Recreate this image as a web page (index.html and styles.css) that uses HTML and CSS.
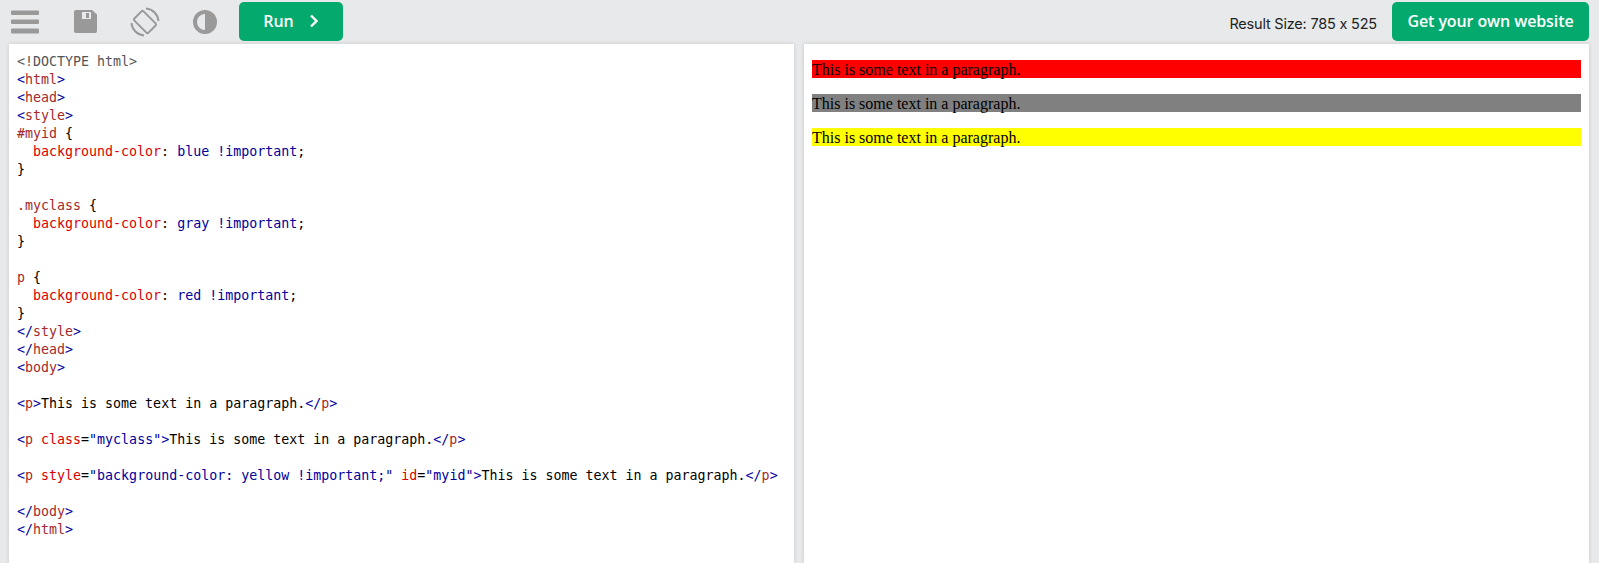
FILE: index.html
```html
<!DOCTYPE html>
<html lang="en">
<head>
<meta charset="utf-8">
<title>Tryit Editor</title>
<link rel="stylesheet" href="styles.css">
</head>
<body>
<header class="toolbar">
  <div class="tools">
    <svg class="icon menu" viewBox="0 0 28 24" width="28" height="24"><rect x="0" y="0.500" width="28" height="4.500" rx="1"/><rect x="0" y="9.500" width="28" height="4.500" rx="1"/><rect x="0" y="18.500" width="28" height="5" rx="1"/></svg>
    <svg class="icon save" viewBox="0 0 23 23" width="23" height="23"><path fill-rule="evenodd" d="M2 0H18L23 4.500V21a2 2 0 0 1-2 2H2a2 2 0 0 1-2-2V2a2 2 0 0 1 2-2ZM8 2V9H17V2ZM12 3H15V8H12Z"/></svg>
    <svg class="icon rotate" viewBox="0 0 30 30" width="30" height="30"><g fill="none" stroke="#999" stroke-width="2"><rect x="8.500" y="5" width="13" height="20" rx="1.500" transform="rotate(-45 15 15)"/><path d="M16 1.500A13.500 13.500 0 0 1 28.500 14"/><path d="M14 28.500A13.500 13.500 0 0 1 1.500 16"/></g></svg>
    <svg class="icon contrast" viewBox="0 0 24 24" width="24" height="24"><path fill-rule="evenodd" d="M12 0a12 12 0 1 1 0 24a12 12 0 0 1 0-24ZM12 4a8 8 0 0 0 0 16Z"/></svg>
    <button class="btn run" type="button">Run <svg class="chev" viewBox="0 0 10 14" width="10" height="14"><path d="M2 1.500L7.500 7L2 12.500" fill="none" stroke="#fff" stroke-width="2.400"/></svg></button>
  </div>
  <div class="right">
    <span class="size">Result Size: 785 x 525</span>
    <button class="btn own" type="button">Get your own website</button>
  </div>
</header>
<main class="panes">
<section class="pane code">
<div class="ln"><span class="c">&lt;!DOCTYPE html&gt;</span></div>
<div class="ln"><b>&lt;</b><i>html</i><b>&gt;</b></div>
<div class="ln"><b>&lt;</b><i>head</i><b>&gt;</b></div>
<div class="ln"><b>&lt;</b><i>style</i><b>&gt;</b></div>
<div class="ln"><i>#myid</i> {</div>
<div class="ln">  <u>background-color</u>: <b>blue !important</b>;</div>
<div class="ln">}</div>
<div class="ln"></div>
<div class="ln"><i>.myclass</i> {</div>
<div class="ln">  <u>background-color</u>: <b>gray !important</b>;</div>
<div class="ln">}</div>
<div class="ln"></div>
<div class="ln"><i>p</i> {</div>
<div class="ln">  <u>background-color</u>: <b>red !important</b>;</div>
<div class="ln">}</div>
<div class="ln"><b>&lt;/</b><i>style</i><b>&gt;</b></div>
<div class="ln"><b>&lt;/</b><i>head</i><b>&gt;</b></div>
<div class="ln"><b>&lt;</b><i>body</i><b>&gt;</b></div>
<div class="ln"></div>
<div class="ln"><b>&lt;</b><i>p</i><b>&gt;</b>This is some text in a paragraph.<b>&lt;/</b><i>p</i><b>&gt;</b></div>
<div class="ln"></div>
<div class="ln"><b>&lt;</b><i>p</i> <u>class</u>=<b>"myclass"&gt;</b>This is some text in a paragraph.<b>&lt;/</b><i>p</i><b>&gt;</b></div>
<div class="ln"></div>
<div class="ln"><b>&lt;</b><i>p</i> <u>style</u>=<b>"background-color: yellow !important;"</b> <u>id</u>=<b>"myid"&gt;</b>This is some text in a paragraph.<b>&lt;/</b><i>p</i><b>&gt;</b></div>
<div class="ln"></div>
<div class="ln"><b>&lt;/</b><i>body</i><b>&gt;</b></div>
<div class="ln"><b>&lt;/</b><i>html</i><b>&gt;</b></div>
</section>
<section class="pane result">
  <p class="red">This is some text in a paragraph.</p>
  <p class="gray">This is some text in a paragraph.</p>
  <p class="yellow">This is some text in a paragraph.</p>
</section>
</main>
</body>
</html>
```
FILE: styles.css
```css
* { box-sizing: border-box; }
html, body { margin: 0; height: 100%; overflow: hidden; }
body {
  display: flex;
  flex-direction: column;
  background: #e7e9eb;
}
.toolbar {
  height: 44px;
  flex: none;
  display: flex;
  justify-content: space-between;
  align-items: flex-start;
  padding: 2px 10px 0 11px;
}
.tools { display: flex; align-items: center; height: 39px; }
.icon { fill: #999; flex: none; }
.save { margin-left: 35px; }
.rotate { margin-left: 33px; }
.contrast { margin-left: 33px; }
.btn {
  border: 0;
  height: 39px;
  background: #04aa6d;
  color: #fff;
  border-radius: 5px;
  font-family: "Open Sans", sans-serif;
  font-weight: 600;
  font-size: 16px;
}
.run {
  width: 104px;
  margin-left: 22px;
  display: flex;
  align-items: center;
  justify-content: center;
  gap: 15px;
  padding: 0 0 1px;
}
.chev { flex: none; }
.right { display: flex; align-items: center; height: 39px; }
.size {
  font-family: Inter, sans-serif;
  font-size: 14.5px;
  letter-spacing: -0.2px;
  color: #222;
  margin: 3px 15px 0 0;
}
.own { width: 197px; padding: 0 0 2px; font-size: 16px; letter-spacing: -0.1px; }
.panes {
  flex: 1;
  min-height: 0;
  display: flex;
  gap: 10px;
  padding-left: 9px;
}
.pane {
  width: 785px;
  margin: 0;
  background: #fff;
  box-shadow: 0 0 4px rgba(0, 0, 0, 0.15);
}
.code {
  padding: 9px 0 0 8px;
  font-family: "DejaVu Sans Mono", monospace;
  font-size: 13.3px;
  line-height: 18px;
  color: #000;
}
.ln { height: 18px; white-space: pre; }
.code b { font-weight: 400; color: #00009e; }
.code i { font-style: normal; color: #a52a2a; }
.code u { text-decoration: none; color: #d80000; }
.code .c { color: #555; }
.result {
  padding: 16px 8px 0;
  font-family: "Liberation Serif", serif;
  font-size: 16px;
  line-height: 18px;
  color: #000;
}
.result p { margin: 0 0 16px; height: 18px; padding-top: 1px; }
.red { background: #f00; }
.gray { background: #808080; }
.yellow { background: #ff0; }
```
